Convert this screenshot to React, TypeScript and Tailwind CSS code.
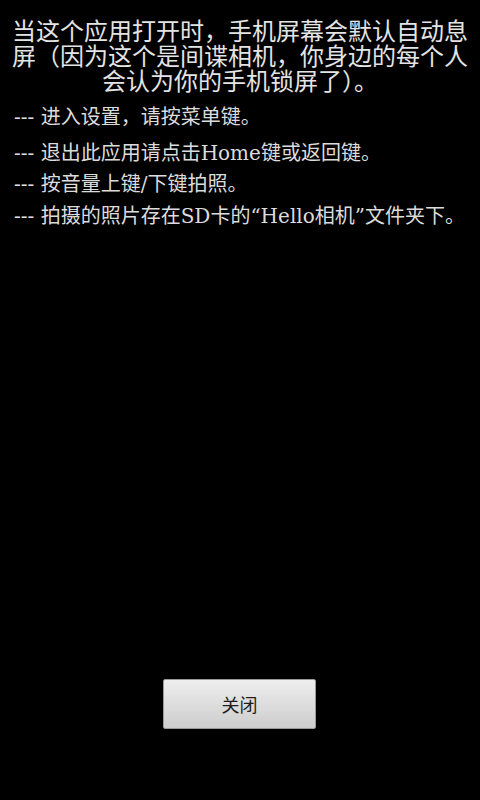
import React from 'react';

const tips = [
  '进入设置，请按菜单键。',
  '退出此应用请点击Home键或返回键。',
  '按音量上键/下键拍照。',
  '拍摄的照片存在SD卡的“Hello相机”文件夹下。',
];

function App() {
  return (
    <div className="h-[800px] w-[480px] bg-black flex flex-col overflow-hidden">
      {/* Intro */}
      <p
        className="pt-[17px] px-[12px] text-center text-[24px] leading-[25px] text-[#e4e4e4]"
        style={{ fontFamily: '"Noto Sans CJK SC", sans-serif' }}
      >
        当这个应用打开时，手机屏幕会默认自动息
        <br />
        屏（因为这个是间谍相机，你身边的每个人
        <br />
        会认为你的手机锁屏了）。
      </p>

      {/* Tips */}
      <ul
        className="mt-[10px] px-[14px] text-[20px] leading-[31.5px] text-[#dcdcdc]"
        style={{ fontFamily: '"DejaVu Serif", "Noto Sans CJK SC", serif' }}
      >
        {tips.map((tip, i) => (
          <li key={i} className={i === 0 ? 'mb-[4px] whitespace-nowrap' : 'whitespace-nowrap'}>
            --- {tip}
          </li>
        ))}
      </ul>

      {/* Close button */}
      <div className="mt-auto mb-[71px] flex justify-center">
        <button
          className="w-[153px] h-[50px] ml-[-1px] rounded-[2px] border border-[#9a9a9a] bg-gradient-to-b from-[#eeeeee] to-[#cdcdcd] text-[18px] text-[#1e1e1e]"
          style={{ fontFamily: '"Noto Sans CJK SC", sans-serif' }}
        >
          关闭
        </button>
      </div>
    </div>
  );
}

export default App;
